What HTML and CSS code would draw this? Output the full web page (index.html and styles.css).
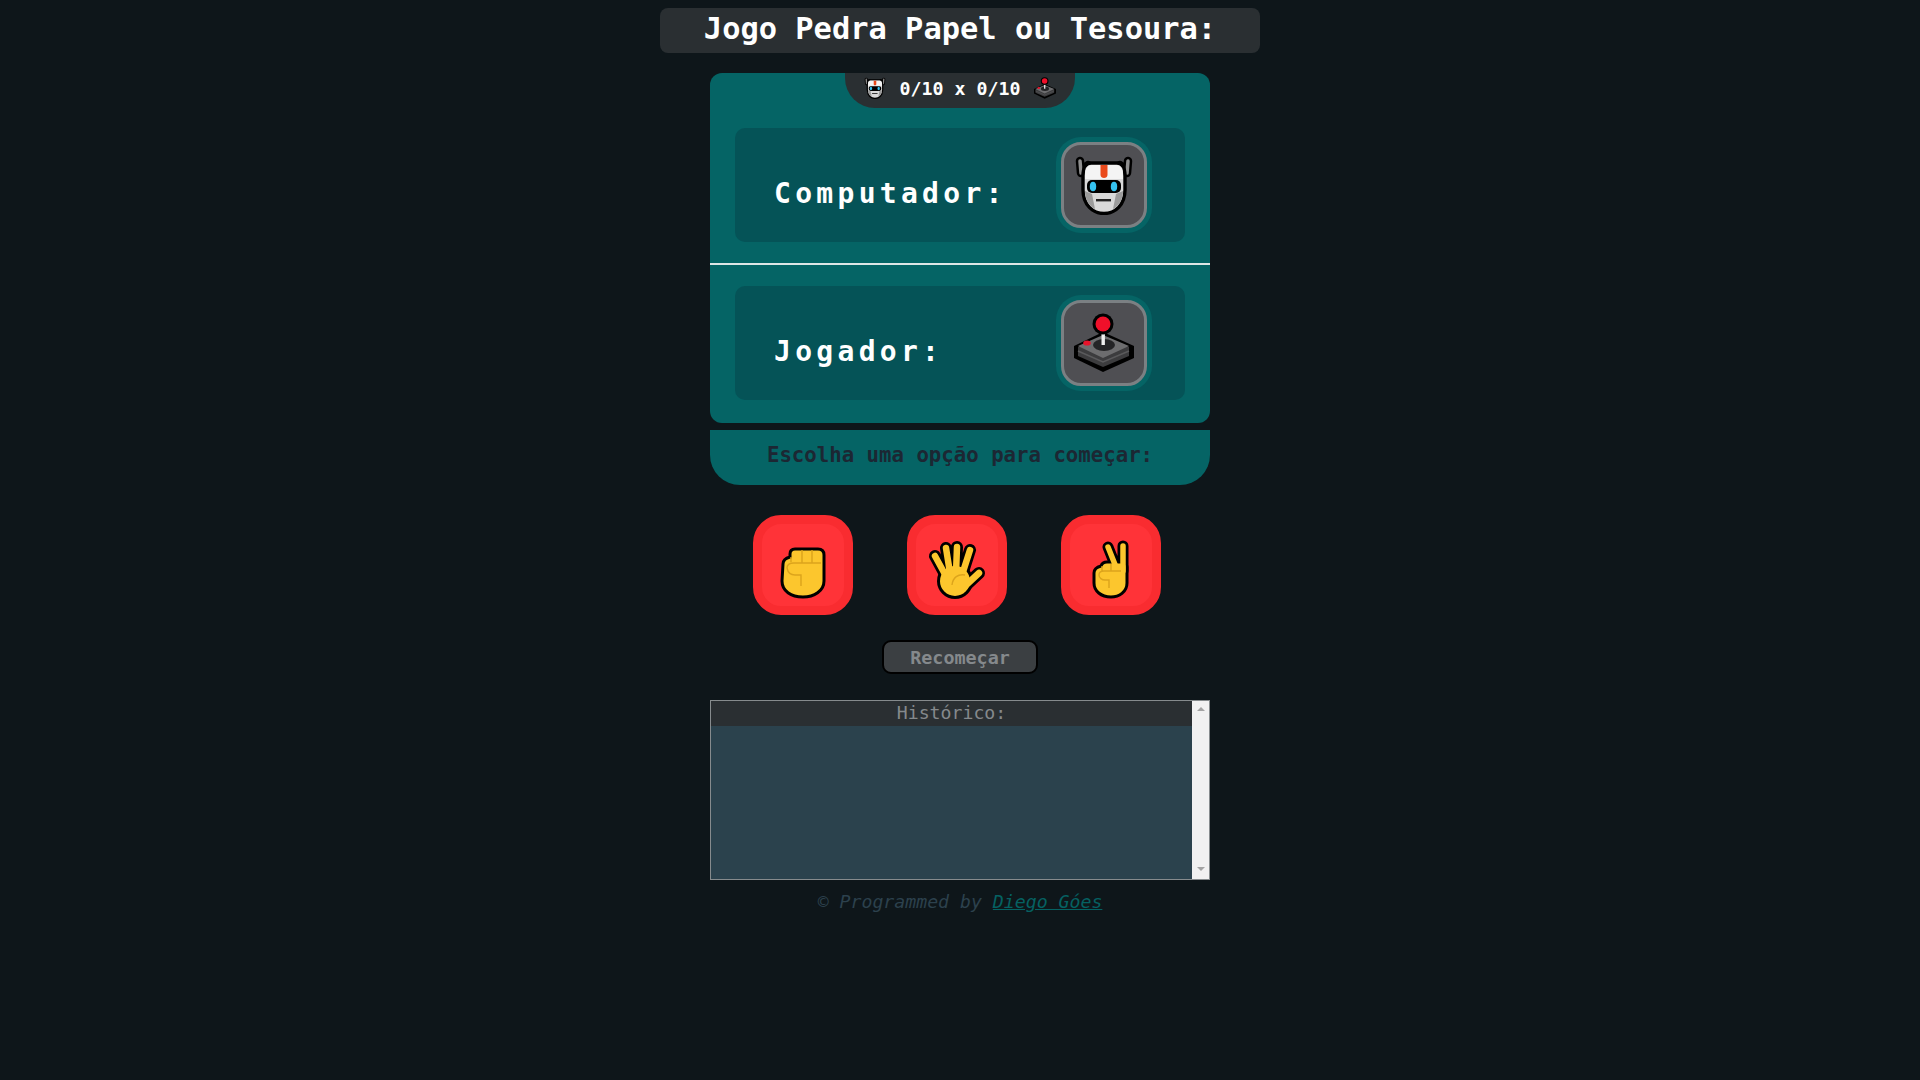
FILE: index.html
```html
<!DOCTYPE html>
<html lang="pt">
<head>
<meta charset="utf-8">
<title>Jogo Pedra Papel ou Tesoura</title>
<link rel="stylesheet" href="styles.css">
</head>
<body>
<svg class="defs" width="0" height="0" aria-hidden="true">
  <symbol id="robot" viewBox="0 0 60 60">
    <path d="M6 6 L7 18 L14 10 M54 6 L53 18 L46 10" stroke="#000" stroke-width="8.5" stroke-linecap="round" stroke-linejoin="round" fill="none"/>
    <path d="M6 6 L7 18 M54 6 L53 18" stroke="#8f8f8f" stroke-width="3.5" stroke-linecap="round" fill="none"/>
    <path d="M17 8 H43 C48 8 51 13 51 21 V35 C51 50 41 58.5 30 58.5 C19 58.5 9 50 9 35 V21 C9 13 12 8 17 8 Z" fill="#d9d9d9" stroke="#000" stroke-width="3.4"/>
    <path d="M11 36 L18 39 L21 54 C15 51 11 44 11 36 Z M49 36 L42 39 L39 54 C45 51 49 44 49 36 Z" fill="#9b9b9b"/>
    <path d="M11 24 V20 C11 13 14 10 18 10 H42 C46 10 49 13 49 20 V24 Z" fill="#f4f4f4"/>
    <path d="M26.5 10 H33.5 L33.5 20 C33.5 24 26.5 24 26.5 20 Z" fill="#ea4a1c"/>
    <rect x="13" y="25" width="34" height="13" rx="5" fill="#000"/>
    <ellipse cx="19" cy="31.5" rx="3.2" ry="4.8" fill="#35c2f0"/>
    <ellipse cx="40" cy="31.5" rx="3.2" ry="4.8" fill="#35c2f0"/>
    <rect x="22" y="44" width="15" height="2.4" fill="#222"/>
  </symbol>
  <symbol id="joystick" viewBox="0 0 60 60">
    <path d="M29 19 L60 33 V45 L29 59 L0 45 V33 Z" fill="#000"/>
    <path d="M29 23 L55 34 V43 L29 54 L4 43 V34 Z" fill="#3c3c3e"/>
    <path d="M4 38 L29 49 L55 38" stroke="#5a5a5c" stroke-width="1.5" fill="none"/>
    <path d="M29 22 L55 33 L29 45 L4 33 Z" fill="#6d6d6f"/>
    <ellipse cx="30" cy="32" rx="11" ry="6" fill="#242426"/>
    <ellipse cx="13" cy="30" rx="3.8" ry="2.6" fill="#e8132b"/>
    <rect x="27.5" y="14" width="3.4" height="18" fill="#eee"/>
    <circle cx="29" cy="11" r="10.5" fill="#000"/>
    <circle cx="29" cy="11" r="7.5" fill="#f0102a"/>
  </symbol>
  <symbol id="rock" viewBox="0 0 100 100">
    <path d="M30 49 C30 45 33 43 37 42 V39 C37 35 39 34 42 34 H65 C69 34 71 36 71 40 V66 C71 76 61 82 50 82 C38 82 29 76 29 66 Z" fill="#fcc62d" stroke="#000" stroke-width="3"/>
    <path d="M38 42 V47 M49 35 V48 M59 35 V48 M34 53 C34 49 37 48 41 48 H68 M34 53 C35 58 38 60 42 60 H48 V71" stroke="#dca41c" stroke-width="1.4" fill="none"/>
  </symbol>
  <symbol id="paper" viewBox="0 0 100 100">
    <g stroke="#000" stroke-width="12" stroke-linecap="round" fill="none">
      <path d="M28 41 L40 63 M39 33 L43 58 M50 32 L49 58 M63 35 L55 60 M72 58 L57 72"/>
    </g>
    <circle cx="48" cy="66" r="18" fill="#000"/>
    <g stroke="#fcc62d" stroke-width="6.5" stroke-linecap="round" fill="none">
      <path d="M28 41 L40 63 M39 33 L43 58 M50 32 L49 58 M63 35 L55 60 M72 58 L57 72"/>
    </g>
    <circle cx="48" cy="66" r="15" fill="#fcc62d"/>
    <path d="M45 70 C46 62 51 59 58 60" stroke="#dca41c" stroke-width="1.4" fill="none"/>
  </symbol>
  <symbol id="scissors" viewBox="0 0 100 100">
    <path d="M47 32 L55 52 M62 31 V56" stroke="#000" stroke-width="11" stroke-linecap="round" fill="none"/>
    <path d="M33 58 C33 54 36 52 40 51 C41 48 43 47 46 47 H60 C64 47 66 48 66 52 V68 C66 77 58 82 50 82 C40 82 33 76 33 68 Z" fill="#fcc62d" stroke="#000" stroke-width="3"/>
    <path d="M47 32 L55 52 M62 31 V56" stroke="#fcc62d" stroke-width="5.5" stroke-linecap="round" fill="none"/>
    <path d="M41 51 V56 M50 49 V56 M38 60 C38 57 40 56 43 56 H60 M38 60 C38 63 41 65 44 65 H48 V73" stroke="#dca41c" stroke-width="1.4" fill="none"/>
  </symbol>
</svg>

<main class="app">
  <h1 class="title">Jogo Pedra Papel ou Tesoura:</h1>

  <section class="board">
    <div class="score">
      <svg class="score-icon"><use href="#robot"/></svg>
      <span>0/10 x 0/10</span>
      <svg class="score-icon"><use href="#joystick"/></svg>
    </div>
    <div class="row">
      <span class="row-label">Computador:</span>
      <div class="avatar"><svg class="avatar-icon"><use href="#robot"/></svg></div>
    </div>
    <hr class="divider">
    <div class="row">
      <span class="row-label">Jogador:</span>
      <div class="avatar"><svg class="avatar-icon"><use href="#joystick"/></svg></div>
    </div>
  </section>

  <p class="message">Escolha uma opção para começar:</p>

  <div class="choices">
    <button class="choice" type="button" aria-label="Pedra"><svg class="choice-icon"><use href="#rock"/></svg></button>
    <button class="choice" type="button" aria-label="Papel"><svg class="choice-icon"><use href="#paper"/></svg></button>
    <button class="choice" type="button" aria-label="Tesoura"><svg class="choice-icon"><use href="#scissors"/></svg></button>
  </div>

  <button class="restart" type="button">Recomeçar</button>

  <section class="history">
    <div class="history-main">
      <div class="history-title">Histórico:</div>
    </div>
    <div class="scrollbar">
      <span class="arrow arrow-up"></span>
      <span class="arrow arrow-down"></span>
    </div>
  </section>

  <footer class="footer">© Programmed by <a href="#">Diego Góes</a></footer>
</main>
</body>
</html>
```
FILE: styles.css
```css
* { box-sizing: border-box; }

html, body {
  margin: 0;
  height: 100%;
  background: #0e161a;
}

body {
  font-family: "DejaVu Sans Mono", "Liberation Mono", monospace;
  overflow: hidden;
}

.defs { position: absolute; }

.app {
  display: flex;
  flex-direction: column;
  align-items: center;
  padding-top: 8px;
}

.title {
  width: 600px;
  height: 45px;
  margin: 0 0 20px;
  border-radius: 8px;
  background: #2a2f32;
  color: #fff;
  font-size: 30.4px;
  font-weight: 700;
  line-height: 41px;
  text-align: center;
}

.board {
  position: relative;
  display: flex;
  flex-direction: column;
  align-items: center;
  width: 500px;
  height: 350px;
  padding-top: 55px;
  border-radius: 12px;
  background: #056465;
}

.score {
  position: absolute;
  top: 0;
  left: 135px;
  display: flex;
  align-items: center;
  justify-content: center;
  gap: 13px;
  width: 230px;
  height: 35px;
  padding-bottom: 5px;
  border-radius: 0 0 30px 30px;
  background: #2a2f32;
  color: #fff;
  font-size: 18.3px;
  font-weight: 700;
}

.score-icon { width: 22px; height: 22px; }

.row {
  display: flex;
  align-items: center;
  justify-content: space-between;
  width: 450px;
  height: 114px;
  padding: 0 38px 0 39px;
  border-radius: 10px;
  background: #055357;
}

.row-label {
  padding-top: 17px;
  color: #fff;
  font-size: 28px;
  font-weight: 700;
  letter-spacing: 4.3px;
}

.avatar {
  display: flex;
  align-items: center;
  justify-content: center;
  width: 86px;
  height: 86px;
  border: 3px solid #7b8083;
  border-radius: 20px;
  background: #4f4f53;
  box-shadow: 0 0 0 5px #056465;
}

.avatar-icon { width: 60px; height: 60px; }

.divider {
  width: 100%;
  height: 2px;
  margin: 21px 0;
  border: 0;
  background: #dfe6e6;
}

.message {
  width: 500px;
  height: 55px;
  margin: 7px 0 30px;
  border-radius: 0 0 30px 30px;
  background: #056465;
  color: #1c2733;
  font-size: 20.7px;
  font-weight: 700;
  line-height: 50px;
  text-align: center;
}

.choices {
  display: flex;
  gap: 54px;
  margin-right: 6px;
  margin-bottom: 25px;
}

.choice {
  width: 100px;
  height: 100px;
  padding: 0;
  border: 9px solid #f92c30;
  border-radius: 28px;
  background: #ff3338;
  position: relative;
}

.choice-icon {
  position: absolute;
  top: -9px;
  left: -9px;
  width: 100px;
  height: 100px;
}

.restart {
  width: 156px;
  height: 34px;
  margin: 0 0 26px;
  padding: 0;
  border: 2px solid #000;
  border-radius: 9px;
  background: #3b3f42;
  color: #85898c;
  font-family: inherit;
  font-size: 18.4px;
  font-weight: 700;
}

.history {
  display: flex;
  width: 500px;
  height: 180px;
  border: 1px solid #868b8d;
}

.history-main {
  flex: 1;
  background: #2b424d;
}

.history-title {
  height: 25px;
  background: #2a2f32;
  color: #85898c;
  font-size: 18.2px;
  line-height: 23px;
  text-align: center;
}

.scrollbar {
  display: flex;
  flex-direction: column;
  align-items: center;
  justify-content: space-between;
  width: 17px;
  padding: 6px 0 8px;
  background: #f1f1f1;
}

.arrow {
  width: 0;
  height: 0;
  border-left: 4px solid transparent;
  border-right: 4px solid transparent;
}

.arrow-up { border-bottom: 4px solid #a3a3a3; }
.arrow-down { border-top: 4px solid #a3a3a3; }

.footer {
  margin-top: 11px;
  color: #2c414d;
  font-size: 18.2px;
  font-style: italic;
  line-height: 22px;
}

.footer a { color: #056162; }
```
